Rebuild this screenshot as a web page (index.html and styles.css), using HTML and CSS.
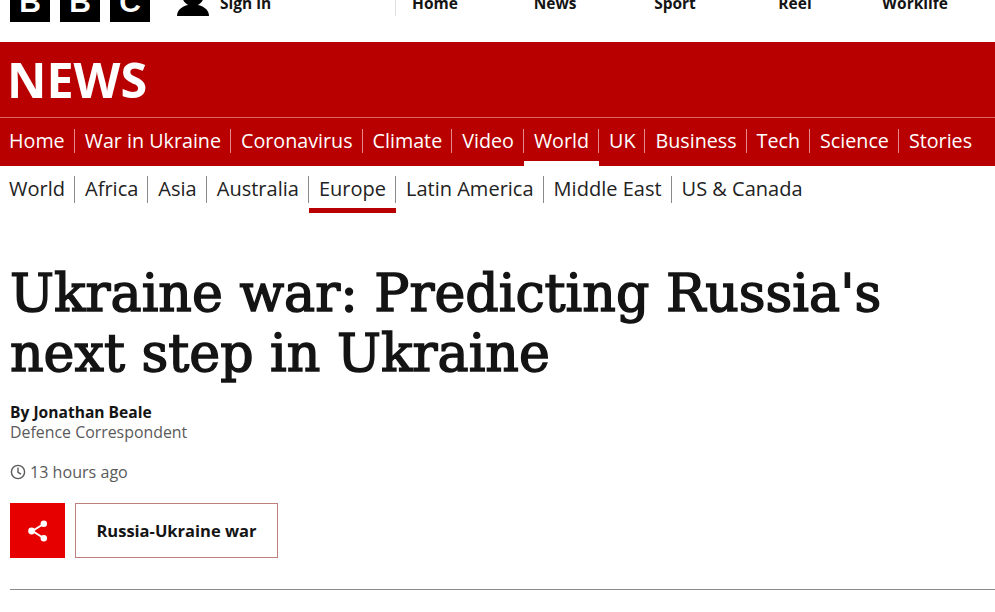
FILE: index.html
```html
<!DOCTYPE html>
<html lang="en">
<head>
    <meta charset="UTF-8">
    <meta name="viewport" content="width=device-width, initial-scale=1.0">
    <title>Ukraine war: Predicting Russia's next step in Ukraine</title>

    <link rel="stylesheet" href="styles.css">
</head>
<body>
    <header class="top-bar">
        <div class="logo">
            <span class="logo-block">B</span>
            <span class="logo-block">B</span>
            <span class="logo-block">C</span>
        </div>

        <a class="sign-in" href="#">
            <svg class="sign-in-icon" viewBox="0 0 32 40" width="32" height="40">
                <circle cx="16" cy="19" r="11"></circle>
                <path d="M0 40c0-7 7-11.500 16-11.500s16 4.500 16 11.500z"></path>
            </svg>
            <span class="sign-in-text">Sign in</span>
        </a>

        <nav class="top-nav">
            <a href="#">Home</a>
            <a href="#">News</a>
            <a href="#">Sport</a>
            <a href="#">Reel</a>
            <a href="#">Worklife</a>
        </nav>
    </header>

    <div class="news-band">
        <div class="news-title">NEWS</div>

        <nav class="main-nav">
            <a href="#">Home</a>
            <a href="#">War in Ukraine</a>
            <a href="#">Coronavirus</a>
            <a href="#">Climate</a>
            <a href="#">Video</a>
            <a class="active" href="#">World</a>
            <a href="#">UK</a>
            <a href="#">Business</a>
            <a href="#">Tech</a>
            <a href="#">Science</a>
            <a href="#">Stories</a>
        </nav>
    </div>

    <nav class="sub-nav">
        <a href="#">World</a>
        <a href="#">Africa</a>
        <a href="#">Asia</a>
        <a href="#">Australia</a>
        <a class="active" href="#">Europe</a>
        <a href="#">Latin America</a>
        <a href="#">Middle East</a>
        <a href="#">US &amp; Canada</a>
    </nav>

    <main class="article">
        <h1 class="headline">Ukraine war: Predicting Russia's next step in Ukraine</h1>

        <div class="byline">
            <div class="byline-name">By Jonathan Beale</div>
            <div class="byline-role">Defence Correspondent</div>
        </div>

        <div class="timestamp">
            <svg viewBox="0 0 16 16" width="16" height="16" fill="none" stroke="#5a5a5a" stroke-width="1.4">
                <circle cx="8" cy="8" r="6.6"></circle>
                <path d="M8 3.6V8.400l3 1.800"></path>
            </svg>
            13 hours ago
        </div>

        <div class="actions">
            <a class="share" href="#" aria-label="Share">
                <svg viewBox="0 0 20 24" width="20" height="24" fill="#fff" stroke="#fff">
                    <path d="M15.500 5 4.500 12l11 7" fill="none" stroke-width="2"></path>
                    <circle cx="15.800" cy="4.800" r="3.200" stroke="none"></circle>
                    <circle cx="3.600" cy="12" r="3.400" stroke="none"></circle>
                    <circle cx="15.800" cy="19.200" r="3.200" stroke="none"></circle>
                </svg>
            </a>
            <a class="topic" href="#">Russia-Ukraine war</a>
        </div>

        <hr class="rule">
    </main>
</body>
</html>
```

FILE: styles.css
```css
body {
    margin: 0;
    height: 612px;
    overflow: hidden;

    font-family: "Open Sans", Arial, sans-serif;
    color: #141414;
    background-color: #fff;
}

a {
    color: inherit;
    text-decoration: none;
}

/* page was scrolled a little when captured, so the bar is cut off at the top */
.top-bar {
    margin-top: -18px;
    height: 60px;
    padding-left: 10px;

    display: flex;
    align-items: flex-start;

    overflow: hidden;
}

.logo {
    display: flex;
    gap: 10px;
}

.logo-block {
    width: 40px;
    height: 40px;

    display: flex;
    align-items: center;
    justify-content: center;

    font-family: "Liberation Sans", Arial, sans-serif;
    font-size: 30px;
    font-weight: bold;
    color: #fff;
    background-color: #000;
}

.sign-in {
    margin-left: 27px;
    width: 218px;
    height: 34px;

    display: flex;
    align-items: flex-end;
    gap: 11px;

    font-size: 15.500px;
    font-weight: 700;
    line-height: 18px;
}

.sign-in-icon {
    flex-shrink: 0;
    fill: #000;
}

.sign-in-text {
    margin-bottom: 4px;
}

.top-nav {
    height: 34px;

    display: flex;
    align-items: flex-end;

    border-left: 1px solid #e0e0e0;

    font-size: 15.500px;
    font-weight: 700;
    line-height: 18px;
}

.top-nav a {
    margin-bottom: 4px;
    width: 120px;
    text-align: center;
}

.top-nav a:first-child {
    margin-left: -21px;
}

.news-band {
    color: #fff;
    background-color: #b80000;
}

.news-title {
    height: 75px;
    padding-left: 7px;

    font-size: 48.500px;
    font-weight: 700;
    line-height: 75px;

    border-bottom: 1px solid #d66;
}

.main-nav {
    height: 48px;
    padding-top: 11px;
    box-sizing: border-box;

    display: flex;
    align-items: flex-start;
}

.main-nav a {
    position: relative;
    padding: 0 9px 0 10px;

    font-size: 19.720px;
    line-height: 24px;

    border-right: 1px solid #e58a8a;
}

.main-nav a:first-child {
    padding-left: 9px;
}

.main-nav a:last-child {
    border-right: 0;
}

.main-nav a.active::after {
    content: '';
    position: absolute;
    left: 0;
    right: -1px;
    bottom: -13px;
    height: 5px;

    background-color: #fff;
}

.sub-nav {
    height: 48px;
    padding-top: 10px;
    box-sizing: border-box;

    display: flex;
    align-items: flex-start;
}

.sub-nav a {
    position: relative;
    padding: 0 9px 2px 10px;

    font-size: 20.030px;
    line-height: 25px;
    color: #222;

    border-right: 1px solid #8a8a8a;
}

.sub-nav a:first-child {
    padding-left: 9px;
}

.sub-nav a:last-child {
    border-right: 0;
}

.sub-nav a.active::after {
    content: '';
    position: absolute;
    left: 0;
    right: -1px;
    bottom: -10px;
    height: 5px;

    background-color: #b80000;
}

.article {
    padding-left: 10px;
}

.headline {
    margin: 49px 0 0;
    max-width: 900px;

    font-family: "DejaVu Serif", serif;
    font-size: 52.200px;
    font-weight: 400;
    line-height: 60px;
    -webkit-text-stroke: 1.500px #141414;
}

.byline {
    margin-top: 19px;

    font-size: 15.600px;
    line-height: 20px;
}

.byline-name {
    font-weight: 700;
}

.byline-role {
    font-size: 15.900px;
    color: #5a5a5a;
}

.timestamp {
    margin-top: 20px;

    display: flex;
    align-items: center;
    gap: 4px;

    font-size: 16.100px;
    line-height: 20px;
    color: #5a5a5a;
}

.actions {
    margin-top: 21px;

    display: flex;
    gap: 10px;
}

.share {
    width: 55px;
    height: 55px;

    display: flex;
    align-items: center;
    justify-content: center;

    background-color: #e60000;
}

.topic {
    width: 203px;
    height: 55px;
    box-sizing: border-box;

    display: flex;
    align-items: center;
    justify-content: center;

    font-size: 16.500px;
    font-weight: 700;

    border: 1px solid #c07f7f;
}

.rule {
    margin: 31px 0 0;
    height: 1px;

    background-color: #8a8a8a;
    border: 0;
}
```
